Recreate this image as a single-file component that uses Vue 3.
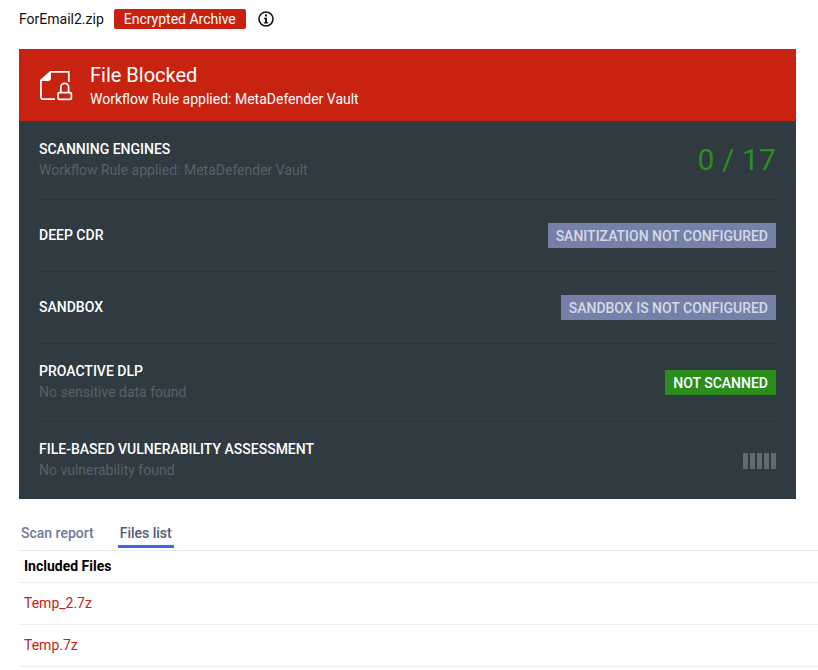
<script setup>
const rows = [
  { title: 'SCANNING ENGINES', sub: 'Workflow Rule applied: MetaDefender Vault', kind: 'score', h: 79 },
  { title: 'DEEP CDR', badge: 'SANITIZATION NOT CONFIGURED', kind: 'muted', h: 72 },
  { title: 'SANDBOX', badge: 'SANDBOX IS NOT CONFIGURED', kind: 'muted', h: 72 },
  { title: 'PROACTIVE DLP', sub: 'No sensitive data found', badge: 'NOT SCANNED', kind: 'green', h: 78 },
  { title: 'FILE-BASED VULNERABILITY ASSESSMENT', sub: 'No vulnerability found', kind: 'bars', h: 77 }
]
const files = ['Temp_2.7z', 'Temp.7z']
</script>

<template>
  <div class="page">
    <div class="top">
      <span class="name">ForEmail2.zip</span>
      <span class="tag">Encrypted Archive</span>
      <svg class="info" width="16" height="16" viewBox="0 0 16 16">
        <circle cx="8" cy="8" r="7" fill="none" stroke="#111" stroke-width="1.6" />
        <rect x="7" y="3.4" width="2" height="2.1" fill="#111" />
        <path d="M6 6.800h3v4.500h1.100v1.200H5.900v-1.200h1.200V8H6z" fill="#111" />
      </svg>
    </div>
    <section class="panel">
      <header class="head">
        <svg class="file" width="34" height="34" viewBox="0 0 34 34" fill="none" stroke="#fff" stroke-width="1.700">
          <path d="M29.800 14V3.800H11.500L1.900 12.500V29a2.200 2.200 0 0 0 2.200 2.200H16" />
          <path d="M11.500 3.800 1.900 12.500h7.600a2 2 0 0 0 2-2z" fill="#fff" stroke-width="1" />
          <rect x="19" y="24.600" width="13.400" height="6.800" rx="1.500" />
          <path d="M21.800 24.600v-5.400a3.900 3.900 0 0 1 7.800 0v5.400" />
        </svg>
        <div class="titles">
          <div class="h1">File Blocked</div>
          <div class="h2">Workflow Rule applied: MetaDefender Vault</div>
        </div>
      </header>
      <div class="body">
        <div v-for="r in rows" :key="r.title" class="row" :style="{ height: r.h + 'px' }">
          <div class="txt">
            <div class="rt">{{ r.title }}</div>
            <div v-if="r.sub" class="rs">{{ r.sub }}</div>
          </div>
          <div v-if="r.kind === 'score'" class="score">0 / 17</div>
          <div v-else-if="r.kind === 'bars'" class="bars"><i v-for="n in 5" :key="n"></i></div>
          <div v-else class="badge" :class="r.kind">{{ r.badge }}</div>
        </div>
      </div>
    </section>
    <nav class="tabs">
      <span class="tab">Scan report</span>
      <span class="tab active">Files list</span>
    </nav>
    <div class="fh">Included Files</div>
    <div v-for="f in files" :key="f" class="fr">{{ f }}</div>
  </div>
</template>

<style>
html, body { background: #fff; }
</style>

<style scoped>
.page { width: 818px; height: 670px; overflow: hidden; font-family: Roboto, "Liberation Sans", sans-serif; box-sizing: border-box; padding-left: 19px; }
.top { height: 49px; box-sizing: border-box; padding-top: 9px; display: flex; align-items: flex-start; }
.name { font-size: 14px; line-height: 20px; color: #111; }
.tag { margin-left: 10px; height: 20px; width: 132px; background: #c9210f; color: #fff; border-radius: 2px; font-size: 14px; line-height: 20px; text-align: center; }
.info { margin: 2px 0 0 12px; }
.panel { width: 777px; }
.head { height: 72px; background: #c82310; display: flex; align-items: center; color: #fff; padding-left: 20px; box-sizing: border-box; }
.file { flex: none; }
.titles { margin-left: 17px; }
.h1 { font-size: 20px; line-height: 26px; }
.h2 { font-size: 14px; line-height: 20px; margin-top: 1px; }
.body { background: #2f3a41; padding: 0 20px; height: 378px; }
.row { display: flex; justify-content: space-between; align-items: center; border-bottom: 1px solid #29333a; box-sizing: border-box; }
.row:last-child { border-bottom: 0; }
.txt { padding-bottom: 1px; }
.rt { font-size: 14px; font-weight: 500; line-height: 18px; color: #fff; }
.rs { font-size: 14px; line-height: 20px; color: #56636a; margin-top: 2px; }
.score { font-size: 30px; line-height: 40px; color: #2b8f1c; letter-spacing: 0.1px; }
.badge { height: 25px; line-height: 27px; padding: 0 8px; font-size: 14px; font-weight: 500; }
.badge.muted { background: #7581a8; color: #d5d9e6; }
.badge.green { background: #2c8c1c; color: #fff; }
.bars { display: flex; gap: 2px; }
.bars i { display: block; width: 5px; height: 16px; background: #5f6d6f; }
.tabs { display: flex; height: 52px; box-sizing: border-box; padding: 24px 0 0 0; border-bottom: 1px solid #e8eaef; gap: 22px; font-size: 14px; }
.tab { padding: 0 2px; height: 25px; line-height: 20px; color: #6f7a99; font-weight: 500; box-sizing: border-box; }
.tab.active { color: #515c78; border-bottom: 3px solid #3f69e0; }
.fh { height: 32px; line-height: 30px; padding-left: 5px; font-size: 14px; font-weight: 700; color: #000; border-bottom: 1px solid #eceef1; box-sizing: border-box; }
.fr { height: 42px; line-height: 41px; padding-left: 5px; font-size: 14px; color: #c9210f; border-bottom: 1px solid #eceef1; box-sizing: border-box; }
</style>
